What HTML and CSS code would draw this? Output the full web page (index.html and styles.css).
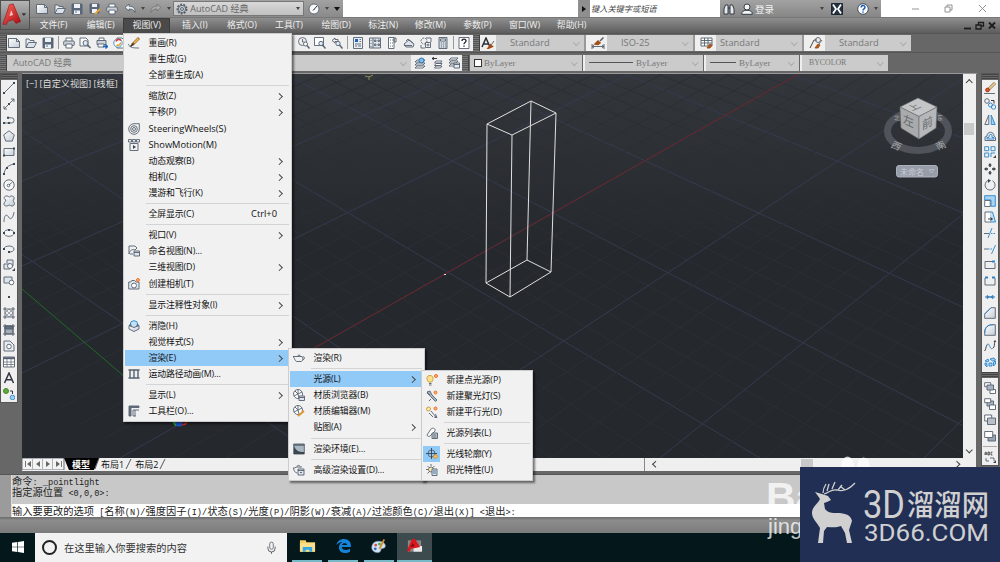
FILE: index.html
```html
<!doctype html>
<html lang="zh-CN">
  <head>
    <meta charset="UTF-8" />
    <title>AutoCAD 经典</title>
    <link rel="stylesheet" href="styles.css">
  </head>
  <body>
    <svg class="sprite">
      <defs>
        <linearGradient id="paper" x1="0" y1="0" x2="1" y2="1"><stop offset="0" stop-color="#fff"/><stop offset="1" stop-color="#c3ccd6"/></linearGradient>
        <linearGradient id="red" x1="0" y1="0" x2="1" y2="1"><stop offset="0" stop-color="#ff6a5c"/><stop offset="1" stop-color="#a80b12"/></linearGradient>
      </defs>
      <!-- file -->
      <symbol id="i-new" viewBox="0 0 12 12"><path d="M.5 1.5h8l3 3v6H.5z" fill="url(#paper)"/><path d="M8.500 1.500v3h3"/></symbol>
      <symbol id="i-open" viewBox="0 0 12 12"><path d="M1 10.500V2h3l1 1.500h4V5" fill="#e8edf2"/><path d="M1 10.500l2.500-5h8L9 10.500z" fill="#dbe2ea"/></symbol>
      <symbol id="i-save" viewBox="0 0 12 12"><path d="M1 1h10v10H1z" fill="#59687c"/><path d="M3 1h6v4H3zM3 7.500h6V11H3z" fill="#eef2f6" stroke="none"/><path d="M4 9h2" /></symbol>
      <symbol id="i-saveas" viewBox="0 0 12 12"><path d="M1 1h9v9H1z" fill="#59687c"/><path d="M3 1h5v3H3zM3 6h5v4H3z" fill="#eef2f6" stroke="none"/><path d="M6 11l5-5" stroke="#e3a13c" stroke-width="2"/></symbol>
      <symbol id="i-print" viewBox="0 0 12 12"><path d="M3 4V1h6v3" fill="#fff"/><rect x=".7" y="4" width="10.600" height="4.500" rx="1" fill="#cdd4dc"/><path d="M3 7h6v4H3z" fill="#fff"/></symbol>
      <symbol id="i-undo" viewBox="0 0 12 12"><path d="M1 4.500L5 1v2.200c4 0 6.500 2 6 6.300C10 7 8 6 5 6v2z" fill="#e9edf1"/></symbol>
      <symbol id="i-redo" viewBox="0 0 12 12"><path d="M11 4.500L7 1v2.200C3 3.200.5 5.200 1 9.500 2 7 4 6 7 6v2z" fill="#aaa" stroke="#777"/></symbol>
      <symbol id="i-gear" viewBox="0 0 12 12"><circle cx="6" cy="6" r="4.600" stroke-width="1.800" stroke-dasharray="2 1.200"/><circle cx="6" cy="6" r="3.600"/><circle cx="6" cy="6" r="1.500"/></symbol>
      <symbol id="i-gauge" viewBox="0 0 12 12"><circle cx="6" cy="6" r="5" fill="#f5f7f9"/><path d="M5.500 7L9 3M6 6.500l-1 1" stroke="#222"/></symbol>
      <symbol id="i-preview" viewBox="0 0 12 12"><path d="M1 1h6l2 2v6H1z" fill="#fff"/><circle cx="6.500" cy="6" r="2.500" fill="#dbe8f5"/><path d="M8.500 8l3 3" stroke-width="1.500"/></symbol>
      <symbol id="i-publish" viewBox="0 0 12 12"><path d="M3 3V1h5v2" fill="#fff"/><path d="M1 3.500h9v4H1z" fill="#cdd4dc"/><path d="M2 7h6v3H2z" fill="#fff"/><path d="M7 9.500h4M9.500 7.500l2 2-2 2" stroke="#1565c0" stroke-width="1.400"/></symbol>
      <symbol id="i-ball" viewBox="0 0 12 12"><path d="M4 1h5l2 2v8H4z" fill="#fff"/><circle cx="5" cy="6" r="4.200" fill="#fff" stroke="#3a8cc9"/><path d="M8 3.500a3 3 0 0 0-5 1" stroke="#d33" stroke-width="1.500"/><path d="M3.500 8c3 1 4-1 4-2.500" stroke="#e0a020" stroke-width="1.500"/></symbol>
      <!-- zoom -->
      <symbol id="i-zoomrt" viewBox="0 0 12 12"><circle cx="4.500" cy="4.500" r="4"/><path d="M4.500 2v3h2"/><circle cx="7.500" cy="7" r="2" fill="#fff"/><path d="M9 8.500l2.500 3" stroke-width="1.400"/></symbol>
      <symbol id="i-zoomwin" viewBox="0 0 12 12"><path d="M.5.5h9v8h-9z" fill="#fff"/><circle cx="7" cy="6.500" r="2.200" fill="#dbe8f5"/><path d="M8.500 8l3 3.500" stroke-width="1.400"/></symbol>
      <symbol id="i-zoomprev" viewBox="0 0 12 12"><path d="M1 3.500L4 1v1.500h3v2H4V6z"/><circle cx="7" cy="6.500" r="2.200" fill="#dbe8f5"/><path d="M8.500 8l3 3.500" stroke-width="1.400"/></symbol>
      <symbol id="i-props" viewBox="0 0 12 12"><path d="M1.500.5h9v11h-9z" fill="#e8eef5"/><path d="M3 2h3v3H3z" fill="#1b63b5" stroke="none"/><path d="M7.500 2.500H9M7.500 4.500H9M3 7h6M3 9h2M6 9h3"/></symbol>
      <symbol id="i-dc" viewBox="0 0 12 12"><path d="M.5 1h11v10H.5z" fill="#dfe5ec"/><path d="M4 1v10M2 3v1M2 6v1M2 9v1M5.500 3h1.500v1.500H5.500zM9 3h1.500v1.500H9zM5.500 7h1.500v1.500H5.500zM9 7h1.500v1.500H9z"/></symbol>
      <symbol id="i-palette" viewBox="0 0 12 12"><path d="M2.500.5H8v11H2.500z" fill="#fff"/><path d="M8 1h2v4H8zM4 3h1M6 3h1M4 6h1M6 6h1M4 9h1M6 9h1"/></symbol>
      <symbol id="i-sheets" viewBox="0 0 12 12"><path d="M1 7l5-4 5 4-1 3H3z" fill="#dfe5ec"/><path d="M3 4l2-2 5 4M1 8.500h8"/></symbol>
      <symbol id="i-markup" viewBox="0 0 12 12"><circle cx="4" cy="4" r="3" stroke-dasharray="2 1"/><path d="M6 1h5v4M1 8v3h4M5.500 5.500h5v5h-5z" fill="#f8f8f8"/><circle cx="8" cy="8" r="1"/></symbol>
      <symbol id="i-calc" viewBox="0 0 12 12"><path d="M2 .5h8v11H2z" fill="#cfd6de"/><path d="M3.500 2h5v2h-5z" fill="#fff"/><path d="M4 6h.8M6 6h.8M8 6h.8M4 8h.8M6 8h.8M8 8h.8M4 10h.8M6 10h.8M8 10h.8"/></symbol>
      <symbol id="i-help" viewBox="0 0 12 12"><path d="M1 .5h10v11H1z" fill="#fff"/><path d="M4 4c0-2.500 4-2.500 4 0 0 1.500-2 1.500-2 3.200M6 8.500v1.200" stroke="#222" stroke-width="1.300"/></symbol>
      <!-- styles -->
      <symbol id="i-textstyle" viewBox="0 0 14 12"><path d="M1 10L5 1l4 9M2.500 7h5" stroke="#2b2f36" stroke-width="1.500"/><path d="M7.500 11l2-3 1.500 1.500z" fill="#b05a1c" stroke="#a04c12" stroke-width="2"/><path d="M10.500 7.500L13 4" stroke="#555"/></symbol>
      <symbol id="i-dimstyle" viewBox="0 0 14 12"><path d="M1 9.500h12M1 7v5M13 7v5M3 8l-2 1.500L3 11M11 8l2 1.500L11 11"/><path d="M4 7l3-3 2 2-2 1.500z" fill="#b05a1c" stroke="#a04c12" stroke-width="1.500"/><path d="M9 4l3.500-3.500" stroke-width="1.500"/></symbol>
      <symbol id="i-tablestyle" viewBox="0 0 14 12"><path d="M1 1h11v8H1z" fill="#fff"/><path d="M1 3.500h11M1 6h11M4.500 1v8M8 1v8"/><path d="M7 11l3-4 2 1-2 3z" fill="#b05a1c" stroke="#a04c12"/></symbol>
      <symbol id="i-leaderstyle" viewBox="0 0 14 12"><path d="M1 11l4-8h3" stroke="#333"/><circle cx="9" cy="3" r="2.500"/><path d="M6 11l3-4 2 1-2 3z" fill="#b05a1c" stroke="#a04c12"/><path d="M10 7l3-4"/></symbol>
      <symbol id="i-layers" viewBox="0 0 12 12"><path d="M3 3h8l-2 2H1zM3 6h8l-2 2H1zM3 9h8l-2 2H1z" fill="#fff"/><circle cx="7.500" cy="3.500" r="2.500" fill="#7dbce8" stroke="#27699f"/></symbol>
      <symbol id="i-layers2" viewBox="0 0 12 12"><path d="M5 4h6l-1.500 2H3.500zM5 6.500h6L9.500 8.500H3.500zM5 9h6l-1.500 2H3.500z" fill="#fff"/><path d="M1 1.500h5M1 1.500l2-1.200M1 1.500l2 1.200" stroke="#222"/></symbol>
      <symbol id="i-layers3" viewBox="0 0 12 12"><path d="M3 1h7L8 3H1zM3 4h7L8 6H1zM3 7h7L8 9H1z" fill="#fff"/><path d="M6 6h5.500v5H6z" fill="#e7ecf2"/><path d="M6 7.500h5.500"/></symbol>
      <!-- draw -->
      <symbol id="d-line" viewBox="0 0 12 12"><path d="M1 11L11 1"/><path class="dot" d="M0 10h2v2H0zM10 0h2v2h-2z"/></symbol>
      <symbol id="d-xline" viewBox="0 0 12 12"><path d="M1 11L11 1M8 1h3v3M1 8v3h3"/><path class="dot" d="M5 5h2v2H5z"/></symbol>
      <symbol id="d-pline" viewBox="0 0 12 12"><path d="M1 9h7.500a2.600 2.600 0 0 0 0-5.200H5"/><path class="dot" d="M0 8h2v2H0zM5 8h2v2H5zM4 2.800h2v2H4z"/></symbol>
      <symbol id="d-polygon" viewBox="0 0 12 12"><path d="M6 .8l5.300 4.100-2 6.200H2.700L.7 4.900z" fill="url(#paper)"/></symbol>
      <symbol id="d-rect" viewBox="0 0 12 12"><path d="M1 2.500h10v7H1z" fill="url(#paper)"/><path class="dot" d="M0 8.500h2v2H0zM10 1.500h2v2h-2z"/></symbol>
      <symbol id="d-arc" viewBox="0 0 12 12"><path d="M1 11C1.500 6 5 2 11 1"/><path class="dot" d="M0 10h2v2H0zM3 4h2v2H3zM10 0h2v2h-2z"/></symbol>
      <symbol id="d-circle" viewBox="0 0 12 12"><circle cx="6" cy="6" r="5.200" fill="#f8f8f8"/><circle cx="5.500" cy="6.500" r="1.300"/><path d="M6 6l3.500-3"/></symbol>
      <symbol id="d-cloud" viewBox="0 0 12 12"><path d="M3 5C0 4 1 .5 4 1c1.500.2 2 1 2.500 1C8 0 12 1 11 4c-.3 1-1 1.500-1 2 2 1.500 2 5-1 5-1.500 0-2-1-3-1-1.500 1.500-5 1.500-5-1 0-2 1.500-2 2-4z" fill="url(#paper)"/></symbol>
      <symbol id="d-spline" viewBox="0 0 12 12"><path d="M1 11C1 3 4 3 5.500 6S10 8 11 1"/></symbol>
      <symbol id="d-ellipse" viewBox="0 0 12 12"><ellipse cx="6" cy="6" rx="5" ry="3.300" fill="#f8f8f8"/><path class="dot" d="M0 5h2v2H0zM10 5h2v2h-2zM5 2h2v2H5z"/></symbol>
      <symbol id="d-earc" viewBox="0 0 12 12"><path d="M1 6c0-4 10-4 10 0 0 2-2 3-5 3"/><path class="dot" d="M0 5h2v2H0zM5 8h2v2H5z"/></symbol>
      <symbol id="d-insert" viewBox="0 0 12 12"><path d="M4 4V1h6v6H8M1 5h6v5H1z" fill="#e3e8ee"/><circle cx="7" cy="7" r="2.500" fill="#fff"/><path class="dot" d="M9 12h3V9z"/></symbol>
      <symbol id="d-block" viewBox="0 0 12 12"><path d="M1 8V2h8v4M1 8h5" fill="#dde3ea"/><circle cx="8.500" cy="7.500" r="2.300" fill="#fff"/></symbol>
      <symbol id="d-point" viewBox="0 0 12 12"><path class="dot" d="M5 5h2v2H5z"/></symbol>
      <symbol id="d-hatch" viewBox="0 0 12 12"><path d="M0 2h12M0 10h12M2 0v12M10 0v12"/><path d="M2 6l4-4M2 10l8-8M6 10l4-4M2 2l8 8M6 2l4 4M2 6l4 4" stroke-width=".5"/></symbol>
      <symbol id="d-gradient" viewBox="0 0 12 12"><path d="M2 2h8v8H2z" fill="#a3adb8"/><path d="M2 2h8v3H2z" fill="#66717e"/><path d="M0 2h12M0 10h12M2 0v12M10 0v12"/></symbol>
      <symbol id="d-region" viewBox="0 0 12 12"><path d="M1 1h6l4 4v6H1z" fill="#e8edf2"/><circle cx="6" cy="6.500" r="2.300" fill="#fff"/></symbol>
      <symbol id="d-table" viewBox="0 0 12 12"><path d="M.5 1h11v10H.5z" fill="#fff"/><path d="M.5 2.200h11" stroke-width="2"/><path d="M.5 6h11M.5 8.500h11M4 3v8M8 3v8" stroke-width=".7"/></symbol>
      <symbol id="d-text" viewBox="0 0 12 12"><path d="M1.500 11L6 1l4.500 10M3.200 7.800h5.600" stroke="#2f363f" stroke-width="1.500"/></symbol>
      <symbol id="d-addsel" viewBox="0 0 12 12"><circle cx="3" cy="3" r="2.500" fill="#5fae3c" stroke="#3c7d22"/><circle cx="9.500" cy="9.500" r="2.300" fill="#9fd0f2" stroke="#3a8cc9"/><path d="M7 3h2.500v3" stroke="#222"/></symbol>
      <!-- modify -->
      <symbol id="m-erase" viewBox="0 0 12 12"><path d="M4 8l7-7" stroke="#666" stroke-width="3"/><path d="M5 7l6-6" stroke="#f0c878" stroke-width="1.800"/><circle cx="3.500" cy="8" r="1.900" fill="#e2542a" stroke="#a33515"/><path d="M0 11.500h11"/></symbol>
      <symbol id="m-copy" viewBox="0 0 12 12"><circle cx="3" cy="3" r="2.300"/><circle cx="6.500" cy="7" r="2" class="b"/><circle cx="9.500" cy="9" r="2.200" class="b"/><path d="M7 2.500h3v3" stroke="#222"/></symbol>
      <symbol id="m-mirror" viewBox="0 0 12 12"><path d="M4.800 1v9.500H.8z" fill="#eee"/><path d="M7.200 1v9.500h4z" class="b" fill="#9fd0f2"/></symbol>
      <symbol id="m-offset" viewBox="0 0 12 12"><path d="M1 10.500V7l2-1c0-5 7-5 7 0l1.500 1.500v3z" fill="#e3e8ee"/><path d="M3 9V7.500h2V5.500c1-1.500 3-1.500 3 0v2h2V9z" class="b"/></symbol>
      <symbol id="m-array" viewBox="0 0 12 12"><path d="M.7.700h4v4h-4zM7 .7h4v4H7z" class="b"/><path d="M.7 7h4v4h-4zM7 11V7h4" class="b"/><path class="dot" d="M9 12h3V9z"/></symbol>
      <symbol id="m-move" viewBox="0 0 12 12"><path d="M6 1v3M6 8v3M1 6h3M8 6h3" stroke="#333" stroke-width="1.400"/><path class="dot" d="M4 2.500L6 0l2 2.500zM4 9.500L6 12l2-2.500zM2.500 4L0 6l2.500 2zM9.500 4L12 6 9.500 8z"/></symbol>
      <symbol id="m-rotate" viewBox="0 0 12 12"><path d="M4 1.500a5 5 0 1 0 4.500.2"/><path class="dot" d="M4 0l3 1.500L4 4z"/></symbol>
      <symbol id="m-scale" viewBox="0 0 12 12"><path d="M.7.700h10.600v10.600H7V5H.7z" class="b" fill="#a9d4f0"/><path d="M.7 5.500h5.500v6H.7z" fill="#fff"/></symbol>
      <symbol id="m-stretch" viewBox="0 0 12 12"><path d="M6 1h2.500l3 10H6z" class="b" fill="#bfe0f5"/><path d="M6.500 1H1v10h5.500" fill="#fff"/><path d="M4 8h4M6.500 6.500L8.500 8l-2 1.500" stroke="#222"/></symbol>
      <symbol id="m-trim" viewBox="0 0 12 12"><path d="M4 11l4-10" class="b"/><path d="M0 6.500h5"/><path d="M7 6.500h5" class="b" stroke-dasharray="1.500 1"/></symbol>
      <symbol id="m-extend" viewBox="0 0 12 12"><path d="M7.500 11L11.500 2" class="b"/><path d="M0 6h4"/><path d="M4 6h4" class="b" stroke-dasharray="1.500 1"/></symbol>
      <symbol id="m-breakpt" viewBox="0 0 12 12"><path d="M8 2.500H1v7h10V4"/><path d="M8 2.500h3" class="b" stroke-width="2"/></symbol>
      <symbol id="m-break" viewBox="0 0 12 12"><path d="M1 3v7h10V3"/><path d="M1 2.500h3M8 2.500h3" class="b" stroke-width="2"/></symbol>
      <symbol id="m-join" viewBox="0 0 12 12"><path d="M1 6h10"/><path d="M3 4.500L5.500 6 3 7.500zM9 4.500L6.500 6 9 7.500z" class="b" fill="#2a84cc"/></symbol>
      <symbol id="m-chamfer" viewBox="0 0 12 12"><path d="M.7 7L7 .7h4.300v10.600H.7z" fill="url(#paper)"/><path d="M.7 7L7 .7" class="b"/></symbol>
      <symbol id="m-fillet" viewBox="0 0 12 12"><path d="M.7 9C.7 3 4 .7 9 .7h2.300v10.600H.7z" fill="url(#paper)"/><path d="M.7 9C.7 3 4 .7 9 .7" class="b"/></symbol>
      <symbol id="m-blend" viewBox="0 0 12 12"><path d="M.5 11C2 10 1.500 7 3 5" stroke="#333"/><path d="M3 5c2-5 3 7 6 3" class="b"/><path d="M9 8c2-1 1-4 2-7M10 2l1-1.500 1 1.500" stroke="#333"/></symbol>
      <symbol id="m-explode" viewBox="0 0 12 12"><path d="M1 5l3-2 1 2-2 1zM6 3l4-1 1.500 2-3 1zM1 7l2 .5V11L1 9zM5 7h3v3H5zM9.500 6l2-1v3l-2 2z" class="b" fill="#a9d4f0"/></symbol>
      <symbol id="o-front" viewBox="0 0 12 12"><path d="M.7.700h6v4h-6zM6 7.500h5.500v4H6z" fill="#fff"/><path d="M3 3h6.500v5H3z" fill="#aab3c4"/></symbol>
      <symbol id="o-back" viewBox="0 0 12 12"><path d="M3 3h6.500v5H3z" fill="#aab3c4"/><path d="M.7.700h6v4h-6zM5.500 7h6v4.500h-6z" fill="#fff"/></symbol>
      <symbol id="o-above" viewBox="0 0 12 12"><path d="M.7 1h7v6h-7z" fill="#fff"/><path d="M3.500 4h8v6.500h-8z" fill="#b9c0ca"/></symbol>
      <symbol id="o-under" viewBox="0 0 12 12"><path d="M4 5h7.500v6H4z" fill="#9aa5b3"/><path d="M.7 1.500h8v6h-8z" fill="#fff"/></symbol>
      <symbol id="o-text" viewBox="0 0 12 12"><path d="M1 4V1.500L2 1l.7.700V4M4 1v3h1.300V1zM8.500 1.200H7V4h1.500M1 3h1.500" stroke="#222" stroke-width=".7"/><path d="M2 7v3h3M6 7h4v3"/><path class="dot" d="M9 12h3V9z"/></symbol>
      <!-- menu -->
      <symbol id="v-redraw" viewBox="0 0 12 12"><path d="M0 7c2 4 6 4 11 4"/><path d="M4 8l7-7" stroke="#8a5a22" stroke-width="2.600"/><path d="M6 6l4.500-4.500" stroke="#f5c044" stroke-width="1.600"/><path d="M2.500 9.500L5 7" stroke="#333" stroke-width="1.400"/></symbol>
      <symbol id="v-wheel" viewBox="0 0 12 12"><path d="M6 .700h5.300V6A5.300 5.300 0 1 1 6 .7z"/><circle cx="6" cy="6" r="3.300"/><circle cx="6" cy="6" r="1.500"/></symbol>
      <symbol id="v-motion" viewBox="0 0 12 12"><path d="M.5.500h3V3h-3zM4.500.500h3V3h-3zM8.500.500h3V3h-3zM2 4.500h8v7H2z"/><path class="dot" d="M5 6l3 2-3 2z"/></symbol>
      <symbol id="v-named" viewBox="0 0 12 12"><path d="M7 1H1v8c1-4 3-5 6-4L9 3 7 1M2 9h3"/><path d="M6 6h5.500v5H6z" fill="#dfe5ec"/><path d="M6 7.500h5.500"/></symbol>
      <symbol id="v-camera" viewBox="0 0 12 12"><path d="M.7 4h2l1-1.500h3L8 4h3v7H.7z" fill="#e3e8ee"/><circle cx="6" cy="7.500" r="2.500" fill="#fff"/><circle cx="10" cy="2" r="1.500" class="o"/></symbol>
      <symbol id="v-hide" viewBox="0 0 12 12"><circle cx="6" cy="4.500" r="3.800" fill="#c4e1f5" class="b"/><path d="M1 5.500l5 2 5-2v3.500l-5 2.500L1 9z" fill="url(#paper)"/><path d="M1 5.500l2-1v1.800M11 5.500l-2-1v1.800"/></symbol>
      <symbol id="v-path" viewBox="0 0 12 12"><path d="M.5 2h11M.5 10h11M2 2v8M6 2v8M10 2v8" stroke-width="1.400"/></symbol>
      <symbol id="v-bars" viewBox="0 0 12 12"><path d="M1 11V1h10v1.500H3V11z" fill="#68727e"/><path d="M11 5H5v6h3M7 5v6"/></symbol>
      <symbol id="r-teapot" viewBox="0 0 12 12"><path d="M3 4.500h6c2 3 0 5-1 5H4c-1 0-2-1-2.500-3L0 4.500h2zM5 4c0-1.500 2-1.500 2 0M9.500 5c3-1 2 3 0 3"/></symbol>
      <symbol id="r-mat" viewBox="0 0 12 12"><circle cx="5" cy="5" r="4.500" fill="#fff"/><path d="M2 2l3 3-4 2M5 5l4-2M5 5l1 4M5 5V.5" /><path d="M6 7h5.500v4.500H6z" fill="#dfe5ec"/><path d="M6 8.500h5"/></symbol>
      <symbol id="r-matedit" viewBox="0 0 12 12"><circle cx="5" cy="5" r="4.500" fill="#fff"/><path d="M2 2l3 3-4 2M5 5l4-2M5 5l1 4M5 5V.5"/><path d="M5 11l6-5" stroke="#e0952b" stroke-width="2"/></symbol>
      <symbol id="r-env" viewBox="0 0 12 12"><path d="M.7 1h10.600v10H.7z" fill="#aab7c2"/><path d="M1 3c2 5 5 6 10 6v2H1z" fill="#3b4650" stroke="none"/><path d="M.7 2h10.600" stroke-width="1.500"/></symbol>
      <symbol id="r-adv" viewBox="0 0 12 12"><path d="M9 3H3L2 4H0c1 2 2 5 4 5M4 2.500c0-1.500 3-1.500 3 0"/><path d="M5 5h6v6H5z" fill="#dfe5ec"/><path d="M5 6.500h6M7 8.500h2"/></symbol>
      <symbol id="l-point" viewBox="0 0 12 12"><path d="M2.500 8C0 5 .5 1.500 4 1.500S8 5 5.700 8z" fill="#ffe08a" stroke="#c69a3b"/><path d="M3 9.500h2.500M3 11h2.500"/><circle cx="10" cy="2" r="1.500" class="o"/></symbol>
      <symbol id="l-spot" viewBox="0 0 12 12"><path d="M1 2l3-1 2 4 5 5-1.500 1.500-5-5z" fill="#aab3bd"/><path d="M1 3l3 2M5 9l-2 2" stroke="#555"/><circle cx="9.500" cy="2.500" r="1.500" class="o"/></symbol>
      <symbol id="l-dist" viewBox="0 0 12 12"><circle cx="2.500" cy="3" r="2" fill="#ffe9a8" stroke="#c69a3b"/><path d="M5 5l5 6M9.500 8l1.500 4-3-1M3 7l4 4"/><circle cx="9.500" cy="2.500" r="1.500" class="o"/></symbol>
      <symbol id="l-list" viewBox="0 0 12 12"><path d="M1 8l4-6c2-2 5 0 4 2L4 9c-1 1-3 0-3-1z" fill="#fff"/><path d="M6 6h5.500v5.500H6z" fill="#c8d0d8"/><path d="M7 8h3.500M7 10h3.500"/></symbol>
      <symbol id="l-glyph" viewBox="0 0 12 12"><circle cx="5.500" cy="5.500" r="3.500"/><path d="M5.500 0v11M0 5.500h11" stroke="#345"/><circle cx="9.500" cy="8.500" r="1.800" fill="#ffc65c" stroke="#d98d1c"/></symbol>
      <symbol id="l-sun" viewBox="0 0 12 12"><circle cx="5" cy="5.500" r="2.500" fill="#ffe9a8"/><path d="M5 0v2M0 5.500h2M1.500 2L3 3.500M8.500 2L7 3.500M1.500 9.500L3 8"/><path d="M6 5h5v6.500H6z" fill="#dfe5ec"/><path d="M7 7h3M7 9h3" stroke="#27699f"/></symbol>
    </svg>

    <div class="titlebar">
      <div class="quick">
        <svg class="ic"><use href="#i-new"/></svg>
        <svg class="ic"><use href="#i-open"/></svg>
        <svg class="ic"><use href="#i-save"/></svg>
        <svg class="ic"><use href="#i-saveas"/></svg>
        <svg class="ic"><use href="#i-print"/></svg>
        <svg class="ic"><use href="#i-undo"/></svg>
        <i class="drop"></i>
        <svg class="ic"><use href="#i-redo"/></svg>
        <i class="drop"></i>
        <div class="workspace-pick"><svg class="ic"><use href="#i-gear"/></svg><span>AutoCAD 经典</span><i class="drop dark"></i></div>
        <svg class="ic"><use href="#i-gauge"/></svg>
        <i class="drop"></i>
        <i class="drop big"></i>
      </div>
      <div class="title-gap"></div>
      <div class="find-arrow"></div>
      <div class="find">键入关键字或短语</div>
      <div class="account">
        <svg class="ic" viewBox="0 0 12 12"><path d="M1 11V6l1.500-4H5v9zM7 11V2h2.500L11 6v5zM5 5h2" fill="#e6e9ec" stroke="#26303a"/></svg>
        <svg class="ic" viewBox="0 0 12 12"><circle cx="6" cy="4" r="3" fill="#f4f4f4" stroke="#26303a"/><path d="M.7 11.300c0-3 2-4 5.300-4s5.300 1 5.300 4z" fill="#f4f4f4" stroke="#26303a"/></svg>
        <span class="login">登录</span>
        <i class="drop"></i>
        <svg class="ic" viewBox="0 0 12 12"><path d="M.5.500h11v11H.5z" fill="#243140" stroke="#15202b"/><path d="M2 1.500l3 4.500-3 4.500M10 1.500L7 6l3 4.500" stroke="#fff" stroke-width="1.800"/></svg>
        <svg class="ic help" viewBox="0 0 12 12"><circle cx="6" cy="6" r="5.300" fill="#fff" stroke="#345"/><path d="M4.200 4.500c0-2.500 3.800-2.500 3.800-.2C8 6 6 5.800 6 7.500M6 8.600v1.200" stroke="#1a57b8" stroke-width="1.500"/></svg>
        <i class="drop"></i>
      </div>
      <div class="window-btns">
        <svg viewBox="0 0 9 9"><path d="M1 5h7"/></svg>
        <svg viewBox="0 0 9 9"><path d="M1 3h5v5H1zM3 3V1h5v5H6"/></svg>
        <svg viewBox="0 0 9 9"><path d="M1 1l7 7M8 1L1 8"/></svg>
      </div>
    </div>

    <div class="menubar">
      <span>文件(F)</span><span>编辑(E)</span><span class="open">视图(V)</span><span>插入(I)</span><span>格式(O)</span><span>工具(T)</span><span>绘图(D)</span><span>标注(N)</span><span>修改(M)</span><span>参数(P)</span><span>窗口(W)</span><span>帮助(H)</span>
      <svg class="mdi" viewBox="0 0 36 9"><path d="M1 7.500h7" stroke-width="1.800"/><path d="M13 4h5v4h-5zM15.500 4V1.500h5V5H18" stroke-width="1.300"/><path d="M26 1.500l6 6M32 1.500l-6 6" stroke-width="1.800"/></svg>
    </div>

    <div class="app-btn">
      <svg viewBox="0 0 30 30"><path d="M2 25L9 4l4-1 8 19-5 2-3-4-6 2-1 3z" fill="url(#red)" stroke="#8f0d12" stroke-width=".6"/><path d="M9 16l2-6 2 5z" fill="#f7c8c3" stroke="none"/><path d="M22 13h5l-2.500 3z" fill="#333" stroke="none"/></svg>
    </div>

    <div class="toolrow">
      <div class="grip"></div>
      <div class="tools std">
        <svg class="ic"><use href="#i-new"/></svg>
        <svg class="ic"><use href="#i-open"/></svg>
        <svg class="ic"><use href="#i-save"/></svg>
        <b></b>
        <svg class="ic"><use href="#i-print"/></svg>
        <svg class="ic"><use href="#i-preview"/></svg>
        <svg class="ic"><use href="#i-publish"/></svg>
        <svg class="ic"><use href="#i-ball"/></svg>
      </div>
      <div class="tools nav">
        <svg class="ic"><use href="#i-zoomrt"/></svg>
        <svg class="ic"><use href="#i-zoomwin"/></svg>
        <svg class="ic"><use href="#i-zoomprev"/></svg>
        <b></b>
        <svg class="ic"><use href="#i-props"/></svg>
        <svg class="ic"><use href="#i-dc"/></svg>
        <svg class="ic"><use href="#i-palette"/></svg>
        <svg class="ic"><use href="#i-sheets"/></svg>
        <svg class="ic"><use href="#i-markup"/></svg>
        <svg class="ic"><use href="#i-calc"/></svg>
        <b></b>
        <svg class="ic"><use href="#i-help"/></svg>
      </div>
      <div class="grip"></div>
      <div class="style-box"><svg class="ic wide"><use href="#i-textstyle"/></svg><div class="combo">Standard</div></div>
      <div class="style-box bar"><svg class="ic wide"><use href="#i-dimstyle"/></svg><div class="combo">ISO-25</div></div>
      <div class="style-box bar"><svg class="ic wide"><use href="#i-tablestyle"/></svg><div class="combo near">Standard</div></div>
      <div class="style-box bar"><svg class="ic wide"><use href="#i-leaderstyle"/></svg><div class="combo">Standard</div></div>
    </div>

    <div class="toolrow second">
      <div class="grip"></div>
      <div class="combo ws">AutoCAD 经典</div>
      <div class="tools layer">
        <svg class="ic"><use href="#i-layers"/></svg>
        <svg class="ic"><use href="#i-layers2"/></svg>
        <svg class="ic"><use href="#i-layers3"/></svg>
      </div>
      <div class="grip"></div>
      <div class="combo mono color"><i class="swatch"></i>ByLayer</div>
      <div class="combo mono ltype"><i class="rule"></i>ByLayer</div>
      <div class="combo mono lweight"><i class="rule"></i>ByLayer</div>
      <div class="combo mono plot">BYCOLOR</div>
    </div>

    <div class="main">
      <div class="side left">
        <div class="side-grip"></div>
        <svg class="ic"><use href="#d-line"/></svg>
        <svg class="ic"><use href="#d-xline"/></svg>
        <svg class="ic"><use href="#d-pline"/></svg>
        <svg class="ic"><use href="#d-polygon"/></svg>
        <svg class="ic"><use href="#d-rect"/></svg>
        <svg class="ic"><use href="#d-arc"/></svg>
        <svg class="ic"><use href="#d-circle"/></svg>
        <svg class="ic"><use href="#d-cloud"/></svg>
        <svg class="ic"><use href="#d-spline"/></svg>
        <svg class="ic"><use href="#d-ellipse"/></svg>
        <svg class="ic"><use href="#d-earc"/></svg>
        <svg class="ic"><use href="#d-insert"/></svg>
        <svg class="ic"><use href="#d-block"/></svg>
        <svg class="ic"><use href="#d-point"/></svg>
        <svg class="ic"><use href="#d-hatch"/></svg>
        <svg class="ic"><use href="#d-gradient"/></svg>
        <svg class="ic"><use href="#d-region"/></svg>
        <svg class="ic"><use href="#d-table"/></svg>
        <svg class="ic"><use href="#d-text"/></svg>
        <svg class="ic"><use href="#d-addsel"/></svg>
      </div>

      <div class="doc">
        <div class="canvas-row">
          <div class="canvas">
            <svg class="scene" viewBox="22 75 941 384">
              <g id="grid"></g>
              <path d="M180 425L800 74" stroke="#6b2529"/>
              <path d="M22 290L180 425" stroke="#1f6b26"/>
              <g stroke="#e0e0e0">
                <path d="M487 125L531 102L556 114L512 136Z"/>
                <path d="M486 284L527 261L551 273L510 298Z"/>
                <path d="M487 125L486 284M531 102L527 261M556 114L551 273M512 136L510 298"/>
              </g>
              <path d="M369 77v4M365 77l4 1 4-2" stroke="#8a8a50"/>
              <path d="M444 275.500h2" stroke="#ddd"/>
              <path d="M181 425l-10-4 4 6z" fill="#2cae35" stroke="none"/>
              <path d="M179 427l9-5-2 4z" fill="#d42a20" stroke="none"/>
              <circle cx="179" cy="424" r="3.500" fill="#1d56c8" stroke="none"/>
            </svg>
            <div class="view-label">[−] [自定义视图] [线框]</div>
            <svg class="viewcube" viewBox="880 92 76 90">
              <ellipse cx="918" cy="132" rx="30.500" ry="19.500" stroke="#50545a" stroke-width="7"/>
              <g fill="#a5a8aa" stroke="none" font-size="10">
                <text transform="matrix(.9 .35 -.5 .8 890 148)">西</text>
                <text transform="matrix(.9 -.35 .5 .8 938 151)">南</text>
                <text x="894" y="121" font-size="6">北</text><text x="937" y="121" font-size="6">东</text>
              </g>
              <g stroke="#6a6c6f" stroke-width=".6">
                <path d="M900 108L918 99L937 108L919 117.500Z" fill="#c4c5c6"/>
                <path d="M900 108L919 117.500V140L901 129Z" fill="#a8aaac"/>
                <path d="M937 108L919 117.500V140L936 129Z" fill="#b5b7b9"/>
              </g>
              <g fill="#66696d" stroke="none" font-size="12">
                <text transform="matrix(.8 -.35 .7 .4 912 112)">上</text>
                <text transform="matrix(.9 .4 0 1 903 124)">左</text>
                <text transform="matrix(.9 -.45 0 1 922 131)">前</text>
              </g>
              <rect x="896.500" y="166.500" width="41" height="11.500" rx="2.500" fill="#989daa" stroke="#b4b9c4"/>
              <text x="900" y="175.500" font-size="8" fill="#c9ccd4" stroke="none">未命名</text>
              <path d="M929 170.500h5l-2.500 3.500z" stroke="#b9bdc7"/>
            </svg>
          </div>
          <div class="vscroll"><i class="up"></i><i class="vthumb"></i><i class="down"></i></div>
        </div>
        <div class="tabs">
          <svg viewBox="0 0 150 12">
            <path d="M0 0h42v12H0z" fill="#f4f4f4"/>
            <path d="M10.500 1v10M20.500 1v10M30.500 1v10M41.500 1v10" stroke="#aaa"/>
            <path d="M9 3v6L5 6zM18 3v6l-4-3zM24 3v6l4-3zM34 3v6l4-3z" fill="#666" stroke="none"/><path d="M3.500 3v6M39.500 3v6" stroke="#666"/>
            <path d="M42 0h35l-5 12H47z" fill="#000" stroke="none"/>
            <path d="M77 0l-4 11M109 1l-5 10M143 1l-5 10" stroke="#444"/>
          </svg>
          <span class="tab on">模型</span><span class="tab">布局1</span><span class="tab">布局2</span>
          <div class="hscroll"><i class="prev"></i><i class="hthumb"></i><i class="next"></i></div>
        </div>
      </div>

      <div class="side right">
        <div class="side-grip"></div>
        <svg class="ic"><use href="#m-erase"/></svg>
        <svg class="ic"><use href="#m-copy"/></svg>
        <svg class="ic"><use href="#m-mirror"/></svg>
        <svg class="ic"><use href="#m-offset"/></svg>
        <svg class="ic"><use href="#m-array"/></svg>
        <svg class="ic"><use href="#m-move"/></svg>
        <svg class="ic"><use href="#m-rotate"/></svg>
        <svg class="ic"><use href="#m-scale"/></svg>
        <svg class="ic"><use href="#m-stretch"/></svg>
        <svg class="ic"><use href="#m-trim"/></svg>
        <svg class="ic"><use href="#m-extend"/></svg>
        <svg class="ic"><use href="#m-breakpt"/></svg>
        <svg class="ic"><use href="#m-break"/></svg>
        <svg class="ic"><use href="#m-join"/></svg>
        <svg class="ic"><use href="#m-chamfer"/></svg>
        <svg class="ic"><use href="#m-fillet"/></svg>
        <svg class="ic"><use href="#m-blend"/></svg>
        <svg class="ic"><use href="#m-explode"/></svg>
        <div class="side-grip"></div>
        <svg class="ic"><use href="#o-front"/></svg>
        <svg class="ic"><use href="#o-back"/></svg>
        <svg class="ic"><use href="#o-above"/></svg>
        <svg class="ic"><use href="#o-under"/></svg>
        <b></b>
        <svg class="ic"><use href="#o-text"/></svg>
      </div>
    </div>

    <div class="command">
      <div class="cmd-grip"></div>
      <div class="cmd-text">
        <p>命令<i>: _pointlight</i></p>
        <p>指定源位置<i> &lt;0,0,0&gt;:</i></p>
        <div class="cmd-input">输入要更改的选项<i> [</i>名称<i>(N)/</i>强度因子<i>(I)/</i>状态<i>(S)/</i>光度<i>(P)/</i>阴影<i>(W)/</i>衰减<i>(A)/</i>过滤颜色<i>(C)/</i>退出<i>(X)] &lt;</i>退出<i>&gt;:</i></div>
      </div>
    </div>
    <div class="statusbar"></div>

    <div class="taskbar">
      <div class="start"><svg viewBox="0 0 12 12"><path d="M0 1.700l5.300-.7v4.700H0zM6 .9L12 0v5.700H6zM0 6.300h5.300V11L0 10.300zM6 6.300h6V12l-6-.9z" fill="#fff" stroke="none"/></svg></div>
      <div class="search">
        <span class="cortana"></span><span class="hint">在这里输入你要搜索的内容</span>
        <svg class="mic" viewBox="0 0 10 14"><rect x="3" y="1" width="4" height="8" rx="2"/><path d="M1 6v2a4 4 0 0 0 8 0V6M5 12v2" stroke="#444"/></svg>
      </div>
      <div class="task"><svg viewBox="0 0 18 16"><path d="M1 2h6l1 2h9v10H1z" fill="#f6d063" stroke="none"/><path d="M1 5h16v9H1z" fill="#fbe08c" stroke="none"/><path d="M4 14V9h10v5h-3v-2H7v2z" fill="#2fa6e6" stroke="none"/></svg></div>
      <div class="task"><svg viewBox="0 0 16 16"><path d="M4 9h11.500C16 4 13 1 8.500 1 4.500 1 1.500 3.500 1 7c1.500-2 3.500-3 6-3-3 1.500-4 4-3.500 6.500C4 13.500 6.500 15 9.500 15c2 0 3.500-.4 5-1.200V10.500C11 13 6.500 12.500 6.300 9zM6.500 7C7 4.800 11.500 4.500 11.500 7z" fill="#1683d8" stroke="none"/></svg></div>
      <div class="task"><svg viewBox="0 0 18 16"><path d="M8 3c5 0 8 3 7 6-1 2-3 1-4 2s0 4-4 4c-4 0-7-3-6-7s4-5 7-5z" fill="#cfe3f2" stroke="#7ea1bb" stroke-width=".6"/><circle cx="5" cy="7" r="1.500" fill="#d44" stroke="none"/><circle cx="9" cy="6" r="1.500" fill="#4a4" stroke="none"/><circle cx="4.500" cy="11" r="1.500" fill="#36c" stroke="none"/><path d="M9 11l5-10" stroke="#d98a2b" stroke-width="1.800"/></svg></div>
      <div class="task active"><svg viewBox="0 0 18 16"><path d="M2 2h14v12H2z" fill="#888" stroke="none"/><path d="M8 8h9v6H8z" fill="#e9e9e9" stroke="none"/><path d="M1 13L6 1l3-1 6 9-5 1-5 1-1 3z" fill="#d8181f" stroke="none"/><path d="M5 9l2-4 2 3z" fill="#7c0a0f" stroke="none"/></svg></div>
    </div>

    <!-- 视图 menu -->
    <div class="menu view-menu">
      <div class="mi"><svg class="ic"><use href="#v-redraw"/></svg>重画(R)</div>
      <div class="mi">重生成(G)</div>
      <div class="mi">全部重生成(A)</div>
      <hr>
      <div class="mi sub">缩放(Z)</div>
      <div class="mi sub">平移(P)</div>
      <div class="mi"><svg class="ic"><use href="#v-wheel"/></svg><span class="lat">SteeringWheels(S)</span></div>
      <div class="mi"><svg class="ic"><use href="#v-motion"/></svg><span class="lat">ShowMotion(M)</span></div>
      <div class="mi sub">动态观察(B)</div>
      <div class="mi sub">相机(C)</div>
      <div class="mi sub">漫游和飞行(K)</div>
      <hr>
      <div class="mi">全屏显示(C)<em>Ctrl+0</em></div>
      <hr>
      <div class="mi sub">视口(V)</div>
      <div class="mi"><svg class="ic"><use href="#v-named"/></svg>命名视图(N)...</div>
      <div class="mi sub">三维视图(D)</div>
      <div class="mi"><svg class="ic"><use href="#v-camera"/></svg>创建相机(T)</div>
      <hr>
      <div class="mi sub">显示注释性对象(I)</div>
      <hr>
      <div class="mi"><svg class="ic"><use href="#v-hide"/></svg>消隐(H)</div>
      <div class="mi sub">视觉样式(S)</div>
      <div class="mi sub on">渲染(E)</div>
      <div class="mi"><svg class="ic"><use href="#v-path"/></svg>运动路径动画(M)...</div>
      <hr>
      <div class="mi sub">显示(L)</div>
      <div class="mi"><svg class="ic"><use href="#v-bars"/></svg>工具栏(O)...</div>
    </div>

    <div class="menu render-menu">
      <div class="mi"><svg class="ic"><use href="#r-teapot"/></svg>渲染(R)</div>
      <hr>
      <div class="mi sub on">光源(L)</div>
      <div class="mi"><svg class="ic"><use href="#r-mat"/></svg>材质浏览器(B)</div>
      <div class="mi"><svg class="ic"><use href="#r-matedit"/></svg>材质编辑器(M)</div>
      <div class="mi sub">贴图(A)</div>
      <hr>
      <div class="mi"><svg class="ic"><use href="#r-env"/></svg>渲染环境(E)...</div>
      <hr>
      <div class="mi"><svg class="ic"><use href="#r-adv"/></svg>高级渲染设置(D)...</div>
    </div>

    <div class="menu light-menu">
      <div class="mi"><svg class="ic"><use href="#l-point"/></svg>新建点光源(P)</div>
      <div class="mi"><svg class="ic"><use href="#l-spot"/></svg>新建聚光灯(S)</div>
      <div class="mi"><svg class="ic"><use href="#l-dist"/></svg>新建平行光(D)</div>
      <hr>
      <div class="mi"><svg class="ic"><use href="#l-list"/></svg>光源列表(L)</div>
      <hr>
      <div class="mi checked"><svg class="ic"><use href="#l-glyph"/></svg>光线轮廓(Y)</div>
      <div class="mi"><svg class="ic"><use href="#l-sun"/></svg>阳光特性(U)</div>
    </div>

    <svg class="watermark" viewBox="760 450 120 112">
      <ellipse cx="847.500" cy="466" rx="6.500" ry="9.500"/><ellipse cx="863.500" cy="467" rx="6.500" ry="9.500"/>
      <text x="766" y="511" font-size="41" font-weight="bold">Ba</text>
      <text x="768" y="534" font-size="22">jing</text>
    </svg>
    <div class="brand">
      <svg viewBox="0 0 200 95">
        <path d="M15 25l7 2 6 2 3 4-4 2-3 1 1 6c3 4 7 4 12 4 8 0 14 2 15 8l-3 9 3 13h-5l-2-10-4-7c-5 2-10 1-14 1l-3 4-1 12h-5l2-15c-3-6-8-9-8-15s5-8 8-14l-2-3z" fill="#d0d0d0" stroke="none"/>
        <path d="M24 27c6-2 7-5 13-4 7 2 12-1 18-7M23 26c0-4 1-6 3-9M27 24l2-7M32 22l3-7M38 23l4-5M45 23l-5-4" stroke="#d0d0d0" stroke-width="1.300"/>
        <g fill="#d0d0d0" stroke="none">
          <text class="logo" x="63" y="51" font-size="38" textLength="42" lengthAdjust="spacingAndGlyphs">3D</text>
          <text class="logo cn" x="107" y="49" font-size="29" textLength="82" lengthAdjust="spacingAndGlyphs">溜溜网</text>
          <text class="logo" x="64" y="74" font-size="23" textLength="125" lengthAdjust="spacingAndGlyphs">3D66.COM</text>
        </g>
      </svg>
    </div>

    <script src="grid.js"></script>
  </body>
</html>
```
FILE: styles.css
```css
* {
  box-sizing: border-box;
}

body {
  margin: 0;
  width: 1000px;
  height: 562px;
  overflow: hidden;
  position: relative;
  display: flex;
  flex-direction: column;
  background: #676767;
  font-family: "Open Sans", "Noto Sans CJK SC", sans-serif;
  font-size: 8.9px;
  color: #111;
}

svg {
  fill: none;
  stroke: #56616e;
  stroke-width: 0.9;
  display: block;
}

.sprite {
  position: absolute;
  width: 0;
  height: 0;
}

.ic {
  width: 12px;
  height: 12px;
  flex: none;
}

.ic.wide {
  width: 14px;
}

.dot {
  fill: #3c4652;
  stroke: none;
}

.b {
  stroke: #2a84cc;
}

.o {
  fill: #ffb070;
  stroke: #ea6a1e;
}

.drop {
  flex: none;
  border: 2px solid transparent;
  border-top: 3px solid #444;
  border-bottom: 0;
}

.drop.big {
  border-width: 4px 3px 0;
  border-top-color: #111;
}

/* title bar */
.titlebar {
  height: 17px;
  flex: none;
  display: flex;
  background: #fff;
}

.quick {
  width: 343px;
  padding-left: 36px;
  display: flex;
  align-items: center;
  gap: 5.6px;
  background: linear-gradient(#a2a2a2, #8a8a8a);
}

.quick .drop {
  margin: 0 0 0 -1px;
}

.workspace-pick {
  width: 131px;
  height: 15px;
  margin-left: -3px;
  padding: 0 3px 0 2px;
  display: flex;
  align-items: center;
  gap: 2px;
  background: linear-gradient(#d8d8d8, #c0c0c0);
  border: 1px solid #777;
  color: #666;
  font-size: 9px;
}

.workspace-pick .drop {
  margin-left: auto;
}

.quick .workspace-pick + .ic {
  margin-left: -2px;
}

.quick .drop.big {
  margin-left: 0;
}

.title-gap {
  width: 235px;
}

.find-arrow {
  width: 12px;
  background: #8f8f8f;
  display: flex;
  align-items: center;
  justify-content: center;
}

.find-arrow::after {
  content: "";
  border: 3px solid transparent;
  border-left: 4px solid #111;
  border-right: 0;
}

.find {
  width: 130px;
  margin: 1px 0;
  padding-left: 1px;
  line-height: 15px;
  font-style: italic;
  font-size: 8.2px;
  color: #444;
}

.account {
  width: 161px;
  padding: 0 3px;
  display: flex;
  align-items: center;
  background: linear-gradient(#a2a2a2, #868686);
}

.account .ic + .ic {
  margin-left: 6px;
}

.login {
  width: 66px;
  margin-left: 2px;
  color: #f4f4f4;
  font-size: 9.5px;
}

.account .drop + .ic {
  margin-left: 7px;
}

.account .ic.help {
  margin: 0 5px 0 14px;
}

.window-btns {
  flex: 1;
  display: flex;
  align-items: center;
  justify-content: center;
  gap: 24.5px;
  padding-left: 16px;
}

.window-btns svg {
  width: 9px;
  height: 9px;
  stroke: #888;
}

/* menu bar */
.menubar {
  height: 15.5px;
  flex: none;
  padding-left: 30px;
  display: flex;
  align-items: stretch;
  background: linear-gradient(#8e8e8e, #5d5d5d);
  border-top: 1px solid #777;
  color: #eee;
  line-height: 14px;
}

.menubar span {
  width: 47.1px;
  text-align: center;
}

.menubar .open {
  margin: 0 1px 0 -1px;
  background: #4a4a4a;
  border: 1px solid #3b3b3b;
  border-bottom: 0;
  line-height: 12px;
}

.mdi {
  width: 36px;
  height: 9px;
  margin: 3px 1px 0 auto;
  stroke: #1c1c1c;
}

.app-btn {
  position: absolute;
  left: 0;
  top: 0;
  width: 30px;
  height: 30px;
  background: linear-gradient(#b4b4b4, #6b6b6b);
  border: 1px solid #505050;
}

/* toolbars */
.toolrow {
  height: 19px;
  flex: none;
  display: flex;
  padding: 1px 0;
  border-top: 1px solid #555;
}

.toolrow.second {
  height: 20px;
  padding: 2px 0 1px;
}

.grip {
  width: 7px;
  flex: none;
  border-right: 1px solid #444;
  background: repeating-linear-gradient(#555 0 1px, #777 1px 2px);
}

.tools {
  flex: none;
  display: flex;
  align-items: center;
  background: #efefef;
  gap: 4.8px;
}

.tools b {
  width: 1px;
  height: 13px;
  margin: 0 -0.8px;
  background: #999;
}

.std {
  width: 284px;
  padding-left: 1px;
}

.nav {
  width: 182px;
  padding-left: 6.5px;
  gap: 4.9px;
}

.style-box {
  width: 104px;
  flex: none;
  display: flex;
  align-items: center;
  background: #efefef;
  padding-left: 1px;
}

.style-box.bar {
  width: 109px;
  padding-left: 1px;
  border-left: 2px solid #999;
}

.style-box.bar .ic {
  margin: 0 1px 0 4px;
}

.combo {
  flex: 1;
  height: 100%;
  position: relative;
  background: #cbcbcb;
  color: #777;
  font-size: 9.3px;
  line-height: 16px;
  padding-left: 14px;
  margin-left: 1px;
}

.combo.near {
  padding-left: 4px;
}

.combo::after {
  content: "";
  position: absolute;
  right: 6px;
  top: 5px;
  width: 3.5px;
  height: 3.5px;
  border: solid #aaa;
  border-width: 0 1px 1px 0;
  transform: rotate(45deg);
}

.combo.ws {
  flex: none;
  width: 404px;
  margin-left: 0;
  padding-left: 6px;
  font-size: 9.1px;
}

.layer {
  width: 51px;
  padding-left: 3px;
  gap: 5px;
}

.combo.mono {
  flex: none;
  display: flex;
  align-items: center;
  gap: 3px;
  padding-left: 4px;
  font-family: "Liberation Serif", serif;
  font-size: 9px;
}

.combo.color { width: 112px; gap: 2px; }
.combo.ltype { width: 120px; }
.combo.lweight { width: 95px; }
.combo.plot { width: 88px; padding-left: 7px; font-size: 7.8px; }

.combo.ltype,
.combo.lweight,
.combo.plot {
  border-left: 2px solid #eee;
}

.swatch {
  width: 8px;
  height: 8px;
  border: 1px solid #333;
  background: #fff;
}

.rule {
  width: 44px;
  height: 1px;
  background: #555;
}

.lweight .rule {
  width: 26px;
}

/* work area */
.main {
  height: 402px;
  flex: none;
  display: flex;
  padding-top: 1px;
}

.side {
  width: 18px;
  flex: none;
  align-self: flex-start;
  display: flex;
  flex-direction: column;
  align-items: center;
  background: #efefef;
  border: 1px solid #555;
  gap: 4.1px;
  padding-bottom: 2px;
}

.side-grip {
  width: 16px;
  height: 6px;
  background: repeating-linear-gradient(#444 0 1px, #666 1px 2px);
}

.side-grip:first-child {
  margin-bottom: -1.5px;
}

.side b {
  width: 14px;
  height: 1px;
  background: #aaa;
}

.doc {
  width: 955px;
  margin: 0 4px 0 4px;
  border-top: 1px solid #999;
  display: flex;
  flex-direction: column;
}

.canvas-row {
  height: 384px;
  display: flex;
}

.canvas {
  width: 941px;
  position: relative;
  background: linear-gradient(#33373c, #25282d 45%);
}

.scene {
  width: 941px;
  height: 384px;
  stroke-width: 1;
}

.minor { stroke: #2c2f35; }
.major { stroke: #363a4e; }

.view-label {
  position: absolute;
  left: 4px;
  top: 2px;
  color: #ddd;
  font-size: 9.15px;
}

.viewcube {
  position: absolute;
  left: 858px;
  top: 17px;
  width: 76px;
  height: 90px;
}

.vscroll {
  width: 13px;
  position: relative;
  background: #efefef;
}

.vthumb {
  position: absolute;
  left: 1px;
  top: 49px;
  width: 10px;
  height: 12px;
  background: #c9c9c9;
}

.up,
.down,
.prev,
.next {
  position: absolute;
  width: 4.5px;
  height: 4.5px;
  border: solid #444;
  border-width: 1.5px 0 0 1.5px;
  transform: rotate(45deg);
}

.up { left: 3.5px; top: 6px; }
.down { left: 3.5px; bottom: 5px; transform: rotate(225deg); }

.tabs {
  height: 13px;
  width: 954px;
  background: #efefef;
  display: flex;
  align-items: center;
  position: relative;
  font-size: 9px;
}

.tabs > svg {
  position: absolute;
  left: 0;
  top: 0;
  width: 150px;
  height: 12px;
}

.tab {
  position: relative;
  margin-right: 11px;
}

.tab.on {
  margin: 0 11px 0 50px;
  color: #fff;
  font-weight: bold;
}

.hscroll {
  position: absolute;
  left: 622px;
  right: 0;
  top: 0;
  bottom: 0;
  border-left: 1px solid #888;
}

.prev { left: 8px; top: 4px; transform: rotate(-45deg); }
.next { right: 17px; top: 4px; transform: rotate(135deg); }

.hthumb {
  position: absolute;
  left: 156px;
  top: 1px;
  width: 12px;
  height: 11px;
  background: #c9c9c9;
}

/* command line */
.command {
  height: 43px;
  flex: none;
  display: flex;
  border-top: 1px solid #555;
  background: #c8c8c8;
}

.cmd-grip {
  width: 12px;
  background: #9b9b9b;
  border-right: 1px solid #ddd;
}

.cmd-text {
  flex: 1;
  font-family: "Noto Sans CJK SC", sans-serif;
  font-size: 10.25px;
  color: #222;
}

.cmd-text i {
  font-family: "Liberation Mono", monospace;
  font-size: 8.6px;
  font-style: normal;
  white-space: pre;
}

.cmd-text p {
  margin: 0;
  height: 11px;
  line-height: 11px;
}

.cmd-input {
  margin-top: 7px;
  height: 13px;
  line-height: 14px;
  background: #fff;
  white-space: nowrap;
}

.statusbar {
  height: 16px;
  flex: none;
  background: linear-gradient(#6a6a6a, #8d8d8d 20%, #7b7b7b);
}

/* taskbar */
.taskbar {
  flex: 1;
  display: flex;
  background: #04171b;
}

.start {
  width: 35px;
  display: flex;
  align-items: center;
  justify-content: center;
}

.start svg {
  width: 12px;
  height: 12px;
}

.search {
  width: 252px;
  display: flex;
  align-items: center;
  padding: 0 11px 0 7px;
  background: #f2f2f2;
}

.cortana {
  width: 15px;
  height: 15px;
  border: 2px solid #222;
  border-radius: 50%;
}

.hint {
  margin-left: 7px;
  font-size: 10.25px;
  color: #333;
}

.mic {
  width: 9px;
  height: 13px;
  margin-left: auto;
}

.task {
  width: 30px;
  margin-left: 5px;
  margin-right: 1px;
  display: flex;
  align-items: center;
  justify-content: center;
  border-bottom: 2px solid #76b9c9;
}

.task.active {
  width: 35px;
  margin-left: 2px;
  background: #3d4a4e;
}

.task svg {
  width: 17px;
  height: 16px;
}

/* drop-down menus */
.menu {
  position: absolute;
  background: #f1f1f1;
  border: 1px solid #ccc;
  box-shadow: 2px 2px 2px rgba(0, 0, 0, 0.5);
  padding: 1px 2px 1px 1px;
}

.mi {
  height: 16.12px;
  line-height: 16px;
  padding-left: 23.5px;
  position: relative;
  white-space: nowrap;
  letter-spacing: -0.1px;
}

.mi .ic {
  position: absolute;
  left: 3px;
  top: 2px;
}

.lat,
.mi em {
  font-size: 9.3px;
  letter-spacing: 0;
}

.mi em {
  position: absolute;
  right: 12px;
  font-style: normal;
}

.mi.on {
  background: #91c9f7;
}

.mi.sub::after {
  content: "";
  position: absolute;
  right: 7.5px;
  top: 6px;
  width: 3.6px;
  height: 3.6px;
  border: solid #444;
  border-width: 1px 1px 0 0;
  transform: rotate(45deg);
}

.mi.checked::before {
  content: "";
  position: absolute;
  left: 0;
  top: 0;
  width: 17px;
  height: 16px;
  background: #91c9f7;
}

.menu hr {
  height: 1px;
  margin: 2px 0 2px 21px;
  border: 0;
  background: #d4d4d4;
}

.view-menu {
  left: 123px;
  top: 33px;
  width: 169px;
  height: 389px;
}

.render-menu {
  left: 288px;
  top: 348px;
  width: 137px;
  height: 132.5px;
}

.light-menu {
  left: 421px;
  top: 369.5px;
  width: 112px;
  height: 111.5px;
}

/* corner marks */
.watermark {
  position: absolute;
  left: 760px;
  top: 450px;
  width: 120px;
  height: 112px;
  fill: rgba(255, 255, 255, 0.75);
  stroke: none;
  font-family: "Liberation Sans", sans-serif;
}

.brand {
  position: absolute;
  left: 800px;
  top: 467px;
  width: 200px;
  height: 95px;
  background: #212f55;
}

.logo {
  font-family: "Roboto", sans-serif;
}

.logo.cn {
  font-family: "Noto Sans CJK SC", sans-serif;
  font-weight: 500;
}
```
FILE: grid.js
```js
// major grid lines in screen space, as [x1, y1, x2, y2]
const falling = [
  [-160, 131, 320, 459],
  [-60, 75, 500, 459],
  [115, 75, 760, 459],
  [285, 75, 1025, 459],
  [457, 75, 1290, 459],
  [625, 75, 1560, 459],
  [790, 75, 1830, 459]
];
const rising = [
  [22, 111, 110, 75],
  [22, 182, 290, 75],
  [22, 267, 457, 75],
  [22, 374, 629, 75],
  [120, 459, 800, 74],
  [386, 459, 970, 75],
  [660, 459, 1137, 75],
  [924, 459, 1307, 75]
];

function drawFamily(lines) {
  let minor = '';
  let major = '';
  lines.forEach((a, i) => {
    major += `M${a[0]} ${a[1]}L${a[2]} ${a[3]}`;
    const b = lines[i + 1];
    if (!b) return;
    for (let k = 1; k < 5; k++) {
      const p = a.map((v, j) => (v + (b[j] - v) * k / 5).toFixed(1));
      minor += `M${p[0]} ${p[1]}L${p[2]} ${p[3]}`;
    }
  });
  return `<path class="minor" d="${minor}"/><path class="major" d="${major}"/>`;
}

document.getElementById('grid').innerHTML = drawFamily(falling) + drawFamily(rising);
```
